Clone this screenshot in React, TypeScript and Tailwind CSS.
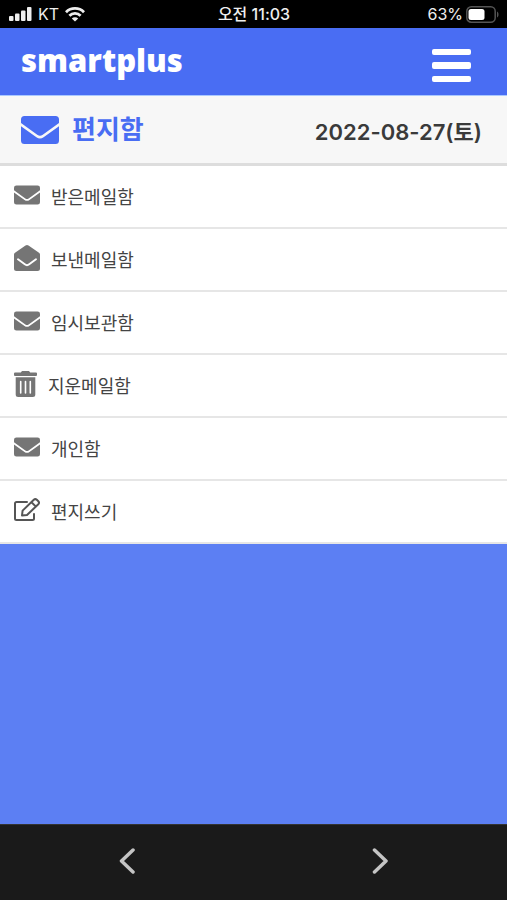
import React from 'react';

interface IconProps {
  className?: string;
}

interface MailBox {
  label: string;
  icon: React.FC<IconProps>;
  iconClass: string;
}

const EnvelopeIcon: React.FC<IconProps> = ({ className }) => (
  <svg className={className} viewBox="0 0 38 28" fill="currentColor" aria-hidden="true">
    <path d="M3.5 0h31A3.5 3.5 0 0 1 38 3.5v3.6L21.4 19a4.2 4.2 0 0 1-4.8 0L0 7.1V3.5A3.5 3.5 0 0 1 3.5 0Z" />
    <path d="M0 10.2 15.400 21.200a6.200 6.200 0 0 0 7.200 0L38 10.200v14.300a3.500 3.500 0 0 1-3.500 3.500h-31A3.500 3.500 0 0 1 0 24.500Z" />
  </svg>
);

const OpenEnvelopeIcon: React.FC<IconProps> = ({ className }) => (
  <svg className={className} viewBox="0 0 26 26" aria-hidden="true">
    <path d="M11.5.6a2.6 2.6 0 0 1 3 0L25 7.7a2.4 2.4 0 0 1 1 2v13.8a2.5 2.5 0 0 1-2.5 2.5h-21A2.5 2.5 0 0 1 0 23.5V9.7a2.4 2.4 0 0 1 1-2Z" fill="currentColor" />
    <path d="m4 14.2 6.8 5.1a3.6 3.6 0 0 0 4.4 0L22 14.2" fill="none" stroke="#fff" strokeWidth="1.9" strokeLinecap="round" />
  </svg>
);

const TrashIcon: React.FC<IconProps> = ({ className }) => (
  <svg className={className} viewBox="0 0 23 26" aria-hidden="true">
    <path d="M8 0h7l1.2 1.5H22a1 1 0 0 1 1 1V4a1 1 0 0 1-1 1H1a1 1 0 0 1-1-1V2.5a1 1 0 0 1 1-1h5.8Z" fill="currentColor" />
    <path d="M1.7 6.3h19.6v17.2a2.5 2.5 0 0 1-2.5 2.5H4.2a2.5 2.5 0 0 1-2.5-2.5Z" fill="currentColor" />
    <path d="M6.7 10.500v11.500M11.500 10.500v11.500M16.300 10.500v11.500" stroke="#fff" strokeWidth="1.6" strokeLinecap="round" />
  </svg>
);

const ComposeIcon: React.FC<IconProps> = ({ className }) => (
  <svg className={className} viewBox="0 0 26 24" fill="none" stroke="currentColor" strokeWidth="2" strokeLinecap="round" strokeLinejoin="round" aria-hidden="true">
    <path d="M13 4H2.500A1.500 1.500 0 0 0 1 5.500v15A1.500 1.500 0 0 0 2.500 22h16a1.500 1.500 0 0 0 1.500-1.500V16" />
    <path d="m8 17.500.6-4.900L19.800 1.800a2.200 2.200 0 0 1 3 0l1.500 1.500a2.200 2.200 0 0 1 0 3L13 17ZM17.500 4.200l4.400 4.400" />
  </svg>
);

const ENVELOPE = 'w-[26px] h-5 mb-1 text-[#757575]';

const mailBoxes: MailBox[] = [
  { label: '받은메일함', icon: EnvelopeIcon, iconClass: ENVELOPE },
  { label: '보낸메일함', icon: OpenEnvelopeIcon, iconClass: 'w-[26px] h-[26px] mb-1 text-[#757575]' },
  { label: '임시보관함', icon: EnvelopeIcon, iconClass: ENVELOPE },
  { label: '지운메일함', icon: TrashIcon, iconClass: 'w-[23px] h-[26px] mb-1 text-[#757575]' },
  { label: '개인함', icon: EnvelopeIcon, iconClass: ENVELOPE },
  { label: '편지쓰기', icon: ComposeIcon, iconClass: 'w-[26px] h-6 mb-1 text-[#555555]' },
];

const SignalIcon = () => (
  <svg className="w-[23px] h-[14px]" viewBox="0 0 23 14" fill="currentColor" aria-hidden="true">
    <rect x="0" y="9" width="4.5" height="5" rx="1" />
    <rect x="6" y="6.5" width="4.5" height="7.5" rx="1" />
    <rect x="12" y="3.5" width="4.5" height="10.5" rx="1" />
    <rect x="18" y="0" width="4.5" height="14" rx="1" />
  </svg>
);

const WifiIcon = () => (
  <svg className="w-5 h-[15px]" viewBox="0 0 20 15" fill="none" stroke="currentColor" strokeWidth="2.8" aria-hidden="true">
    <path d="M1 5.2a12.7 12.7 0 0 1 18 0" />
    <path d="M4.4 8.8a7.9 7.9 0 0 1 11.2 0" />
    <path d="M10 14.6 6.8 11.5a4.5 4.5 0 0 1 6.4 0Z" fill="currentColor" stroke="none" />
  </svg>
);

const BatteryIcon = () => (
  <svg className="w-[33px] h-[17px]" viewBox="0 0 33 17" aria-hidden="true">
    <rect x="0.8" y="0.8" width="28.4" height="15.4" rx="4.5" fill="none" stroke="#555" strokeWidth="1.5" />
    <rect x="2.5" y="3" width="16" height="11" rx="2.5" fill="#fff" />
    <path d="M31 5.5c2 .8 2 5.2 0 6Z" fill="#555" />
  </svg>
);

const StatusBar = () => (
  <div className="grid grid-cols-3 items-center h-7 pl-[9px] pr-2 bg-black text-[#eeeeee] text-base">
    <div className="flex items-center gap-[6px]">
      <SignalIcon />
      <span>KT</span>
      <WifiIcon />
    </div>
    <time className="text-center font-medium whitespace-nowrap">오전 11:03</time>
    <div className="flex items-center justify-end gap-[3px]">
      <span>63%</span>
      <BatteryIcon />
    </div>
  </div>
);

const Header = () => (
  <header className="flex items-center justify-between h-[67px] pl-[21px] pr-9 bg-[#496df3] text-white">
    <a href="#" className="pb-1 font-['Noto_Sans','Open_Sans',sans-serif] text-[31px] leading-10 font-black">smartplus</a>
    <button type="button" aria-label="메뉴" className="flex flex-col gap-[7px] pt-2">
      <span className="w-[39px] h-[6px] rounded-xs bg-white" />
      <span className="w-[39px] h-[7px] rounded-xs bg-white" />
      <span className="w-[39px] h-[6px] rounded-xs bg-white" />
    </button>
  </header>
);

const App: React.FC = () => {
  return (
    <div className="flex flex-col min-h-screen bg-[#5c7ff3] font-[Inter,'Noto_Sans_CJK_KR',sans-serif]">
      <StatusBar />
      <Header />

      <div className="flex items-center justify-between h-[71px] pl-[21px] pr-[25px] bg-[#f7f7f7] border-t border-t-[#a9c8ff] border-b-[3px] border-b-[#dddddd]">
        <h1 className="flex items-center gap-[13px] text-[#496df3] text-[26px] leading-9 font-bold">
          <EnvelopeIcon className="w-[38px] h-[28px]" />
          편지함
        </h1>
        <time dateTime="2022-08-27" className="pt-1 text-[#3a3a3a] text-[22px] leading-8 font-semibold">2022-08-27(토)</time>
      </div>

      <nav className="bg-white">
        <ul>
          {mailBoxes.map(({ label, icon: Icon, iconClass }) => (
            <li key={label} className="border-b-2 border-[#e6e6e6]">
              <a href="#" className="flex items-center gap-[11px] h-[61px] px-[14px] text-[#444444] text-lg">
                <Icon className={iconClass} />
                <span className="pt-[2px]">{label}</span>
              </a>
            </li>
          ))}
        </ul>
      </nav>

      <main className="flex-1" />

      <footer className="grid grid-cols-2 h-[76px] pb-1 bg-[#1a1a1a] border-t border-[#333333] text-[#c4c4c4]">
        <button type="button" aria-label="이전" className="flex items-center justify-center">
          <svg className="w-4 h-7" viewBox="0 0 16 28" fill="none" stroke="currentColor" strokeWidth="3.5" strokeLinecap="round" strokeLinejoin="round">
            <path d="M14 3 2.5 14 14 25" />
          </svg>
        </button>
        <button type="button" aria-label="다음" className="flex items-center justify-center">
          <svg className="w-4 h-7" viewBox="0 0 16 28" fill="none" stroke="currentColor" strokeWidth="3.5" strokeLinecap="round" strokeLinejoin="round">
            <path d="M2.5 3 14 14 2.5 25" />
          </svg>
        </button>
      </footer>
    </div>
  );
};

export default App;
